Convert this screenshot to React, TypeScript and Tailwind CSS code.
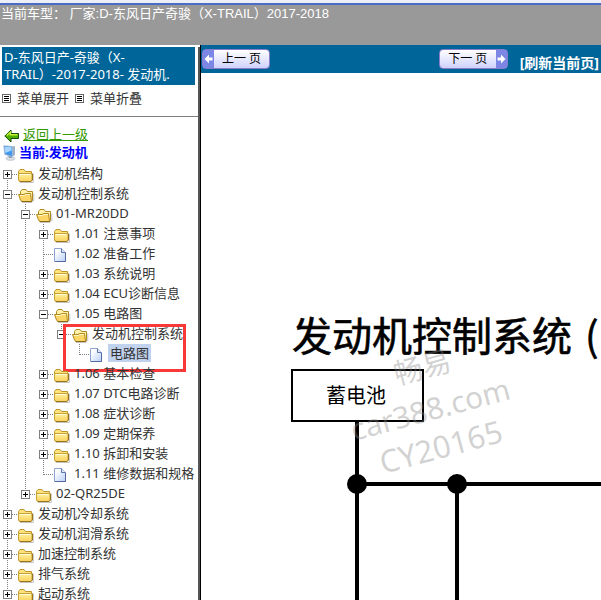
import { useState } from 'react';

interface TreeNode {
  label: string;
  open?: boolean;
  selected?: boolean;
  highlighted?: boolean;
  leaf?: boolean;
  children?: TreeNode[];
}

const tree: TreeNode[] = [
  { label: '发动机结构' },
  {
    label: '发动机控制系统',
    open: true,
    children: [
      {
        label: '01-MR20DD',
        open: true,
        children: [
          { label: '1.01 注意事项' },
          { label: '1.02 准备工作', leaf: true },
          { label: '1.03 系统说明' },
          { label: '1.04 ECU诊断信息' },
          {
            label: '1.05 电路图',
            open: true,
            children: [
              {
                label: '发动机控制系统',
                open: true,
                highlighted: true,
                children: [{ label: '电路图', leaf: true, selected: true }],
              },
            ],
          },
          { label: '1.06 基本检查' },
          { label: '1.07 DTC电路诊断' },
          { label: '1.08 症状诊断' },
          { label: '1.09 定期保养' },
          { label: '1.10 拆卸和安装' },
          { label: '1.11 维修数据和规格', leaf: true },
        ],
      },
      { label: '02-QR25DE' },
    ],
  },
  { label: '发动机冷却系统' },
  { label: '发动机润滑系统' },
  { label: '加速控制系统' },
  { label: '排气系统' },
  { label: '起动系统' },
];

function Guide({ visible }: { visible: boolean }) {
  return (
    <svg width="18" height="20" className="shrink-0" shapeRendering="crispEdges">
      {visible && <path d="M7.5 0V20" stroke="#808080" strokeDasharray="1 1" />}
    </svg>
  );
}

function Connector({ first, last, kind }: { first: boolean; last: boolean; kind: 'plus' | 'minus' | 'leaf' }) {
  return (
    <svg width="18" height="20" className="shrink-0" shapeRendering="crispEdges">
      <path
        d={`M7.5 ${first ? 10 : 0}V${last ? 11 : 20}M8 10.5H18`}
        stroke="#808080"
        strokeDasharray="1 1"
        fill="none"
      />
      {kind !== 'leaf' && (
        <>
          <rect x="3.5" y="6.5" width="8" height="8" fill="#fff" stroke="#808080" />
          <path d={kind === 'plus' ? 'M5 10.5H10M7.5 8V13' : 'M5 10.5H10'} stroke="#000" fill="none" />
        </>
      )}
    </svg>
  );
}

function FolderIcon() {
  return (
    <svg width="18" height="20" className="shrink-0">
      <defs>
        <linearGradient id="folder" x1="0" y1="0" x2="0" y2="1">
          <stop offset="0" stopColor="#fff3a0" />
          <stop offset="1" stopColor="#fbd05c" />
        </linearGradient>
      </defs>
      <path d="M2 18.5H15.3V9.5" stroke="#c4c4c4" fill="none" />
      <path d="M.5 16V7.5L2 5.5H6L7.5 7.5H13.5V17H1.5Z" fill="#ffe27a" stroke="#bd962a" />
      <path d="M.5 9.5H13L14 10.5V16L12.5 17.5H2L.5 16Z" fill="url(#folder)" stroke="#c9a23a" />
      <path d="M2 10.5H12.5" stroke="#fffbd6" />
      <path d="M1.5 17.5H13L14.5 16V9.5" stroke="#9a741a" fill="none" />
    </svg>
  );
}

function OpenFolderIcon() {
  return (
    <svg width="18" height="20" className="shrink-0">
      <path d="M4 18.5H14L15.8 16.5V9.5" stroke="#c4c4c4" fill="none" />
      <path d="M2.5 15V7.5L4 5.5H8L9.5 7.5H14.5V16L13 17.5H4Z" fill="#fff2a8" stroke="#b08a20" />
      <path d="M.5 10.5H6L7.5 9.5H12.5L13.5 17.5H4L2.5 16Z" fill="#fbd566" stroke="#b08a20" />
      <path d="M2 11.5H6.5L8 10.5H12" stroke="#fff7c4" fill="none" />
      <path d="M3.5 17.5H13.5L14.5 16.5" stroke="#8b6a14" fill="none" />
    </svg>
  );
}

function PageIcon() {
  return (
    <svg width="18" height="20" className="shrink-0">
      <defs>
        <linearGradient id="page" x1="0" y1="0" x2="1" y2="1">
          <stop offset="0.2" stopColor="#ffffff" />
          <stop offset="1" stopColor="#b9cff8" />
        </linearGradient>
      </defs>
      <path d="M.5 4.5H7.5L11.5 8.5V17.5H.5Z" fill="url(#page)" stroke="#8fa3d2" />
      <path d="M7.5 4.5V8.5H11.5" fill="#dce7fc" stroke="#5f76b0" />
      <path d="M1 17.5H11.5V9" fill="none" stroke="#5568a0" />
    </svg>
  );
}

function TreeItem({ node, guides, first, last }: { node: TreeNode; guides: boolean[]; first: boolean; last: boolean }) {
  const [open, setOpen] = useState(!!node.open);
  const kind = node.leaf ? 'leaf' : open ? 'minus' : 'plus';

  return (
    <li className="relative">
      <div className="flex h-5 items-start whitespace-nowrap">
        {guides.map((visible, i) => (
          <Guide key={i} visible={visible} />
        ))}
        {node.leaf ? (
          <Connector first={first} last={last} kind={kind} />
        ) : (
          <button aria-label={node.label} aria-expanded={open} onClick={() => setOpen(!open)} className="shrink-0">
            <Connector first={first} last={last} kind={kind} />
          </button>
        )}
        {node.leaf ? <PageIcon /> : open ? <OpenFolderIcon /> : <FolderIcon />}
        <a href="#" className={node.selected ? 'bg-[#c1d2ee] px-0.5 leading-[18px]' : 'px-0.5 leading-[18px]'}>
          {node.label}
        </a>
      </div>
      {open && node.children && (
        <ul>
          {node.children.map((child, i) => (
            <TreeItem
              key={child.label}
              node={child}
              guides={[...guides, !last]}
              first={false}
              last={i === node.children!.length - 1}
            />
          ))}
        </ul>
      )}
      {node.highlighted && (
        <div className="pointer-events-none absolute top-0 right-3 -bottom-2 left-[63px] border-3 border-[#f93838]" />
      )}
    </li>
  );
}

function ListIcon() {
  return (
    <svg width="9" height="10" className="shrink-0" shapeRendering="crispEdges">
      <rect x=".5" y=".5" width="8" height="8" fill="#fff" stroke="#666" />
      <path d="M2 2.5H7M2 4.5H7M2 6.5H7" stroke="#000" />
    </svg>
  );
}

function BackIcon() {
  return (
    <svg width="15" height="14" className="shrink-0">
      <path d="M.8 7L7 1V4.5H14.5V9.5H7V13Z" fill="#4fae00" stroke="#0f4f08" strokeLinejoin="round" />
      <path d="M2.8 6.5L6.3 3.3V5.8H13.5" stroke="#c8f238" strokeWidth="1.4" fill="none" />
    </svg>
  );
}

function ComputerIcon() {
  return (
    <svg width="13" height="16" className="shrink-0">
      <ellipse cx="7.5" cy="13.5" rx="4.5" ry="1.8" fill="#dfe3e9" stroke="#a9b2bd" strokeWidth=".7" />
      <path d="M5 10L9 11V13H6Z" fill="#8fa0b8" />
      <path d="M9.5 1.5L12 1V10L9.5 11.5Z" fill="#9fb0c4" />
      <path d="M.8 .8L9.5 1.5V11.5L1.8 9.5Z" fill="#3f97ee" stroke="#a3b6cc" strokeWidth=".8" />
      <path d="M1.6 1.8L8.6 2.3V5.5L2.3 8Z" fill="#a5d6ff" />
    </svg>
  );
}

function PageArrow({ right }: { right?: boolean }) {
  return (
    <svg width="11" height="18" className="shrink-0 bg-[#7c86e4]">
      <path
        d={right ? 'M1.5 7.5H5V4.5L9.5 9L5 13.5V10.5H1.5Z' : 'M9.5 7.5H6V4.5L1.5 9L6 13.5V10.5H9.5Z'}
        fill="#fff"
      />
    </svg>
  );
}

function WiringDiagram() {
  return (
    <svg className="block h-[527px] w-full font-['Noto_Sans_CJK_SC',sans-serif]">
      <g fontSize="40" stroke="#000" strokeWidth=".6">
        <text x="91" y="278">发动机控制系统</text>
        <text x="384" y="278">(</text>
      </g>
      <rect x="91" y="297" width="131" height="51" fill="none" stroke="#000" strokeWidth="2" />
      <text x="125" y="330" fontSize="20">蓄电池</text>
      <g stroke="#000" strokeWidth="4">
        <path d="M156 348V527" />
        <path d="M256 411V527" />
        <path d="M156 411H4000" />
      </g>
      <circle cx="156" cy="411" r="10" />
      <circle cx="256" cy="411" r="10" />
      <g fill="#888" fillOpacity=".38" className="font-['Noto_Sans','Noto_Sans_CJK_SC',sans-serif]">
        <text transform="translate(196 312) rotate(-15)" fontSize="29">畅易</text>
        <text transform="translate(153 368) rotate(-15)" fontSize="30">car388.com</text>
        <text transform="translate(182 401) rotate(-15)" fontSize="31">CY20165</text>
      </g>
    </svg>
  );
}

export default function App() {
  return (
    <div className="flex h-screen flex-col overflow-hidden bg-white font-['Noto_Sans','Noto_Sans_CJK_SC',sans-serif] text-[13px] text-[#333]">
      <header className="h-[45px] shrink-0 bg-[#999]">
        <div className="h-[5px] border-b-2 border-[#4a6cc4] bg-[#eceef8]" />
        <p className="px-px font-['Liberation_Sans','Noto_Sans_CJK_SC',sans-serif] leading-[18px] whitespace-pre text-white">
          当前车型： 厂家:D-东风日产奇骏（X-TRAIL）2017-2018
        </p>
      </header>

      <div className="flex min-h-0 flex-1">
        <aside className="w-[201px] shrink-0 overflow-hidden border-r border-black">
          <div className="h-full border-r-2 border-[#555]">
            <h1 className="mr-[3px] ml-0.5 mt-0.5 bg-[#069] px-0.5 py-0.5 leading-[17px] text-white">
              D-东风日产-奇骏（X-
              <br />
              TRAIL）-2017-2018- 发动机.
            </h1>
            <div className="flex h-8 items-center gap-1.5 border-b border-[#808080] px-0.5 pb-1">
              <ListIcon />
              <button>菜单展开</button>
              <ListIcon />
              <button>菜单折叠</button>
            </div>
            <div className="flex h-[26px] items-end gap-1 px-1">
              <BackIcon />
              <a href="#" className="leading-[18px] text-[#390] underline">返回上一级</a>
            </div>
            <div className="mb-0.5 flex h-[19px] items-center gap-[3px] px-[3px] font-bold text-[#00f]">
              <ComputerIcon />
              当前:发动机
            </div>
            <ul>
              {tree.map((node, i) => (
                <TreeItem key={node.label} node={node} guides={[]} first={i === 0} last={i === tree.length - 1} />
              ))}
            </ul>
          </div>
        </aside>

        <main className="min-w-0 flex-1 overflow-hidden">
          <nav className="flex h-7 items-center bg-[#069] px-px text-xs">
            <button className="flex h-5 w-[68px] items-center rounded-sm border border-[#8a7cc8] bg-linear-to-b from-white to-[#cfd2fb] text-black">
              <PageArrow />
              <span className="flex-1 whitespace-nowrap">上一 页</span>
            </button>
            <button className="mr-3 ml-auto flex h-5 w-[69px] items-center rounded-sm border border-[#8a7cc8] bg-linear-to-b from-white to-[#cfd2fb] text-black">
              <span className="flex-1 whitespace-nowrap">下一 页</span>
              <PageArrow right />
            </button>
            <a href="#" className="pt-2 pr-px text-sm font-bold whitespace-nowrap text-white">[刷新当前页]</a>
          </nav>
          <WiringDiagram />
        </main>
      </div>
    </div>
  );
}
